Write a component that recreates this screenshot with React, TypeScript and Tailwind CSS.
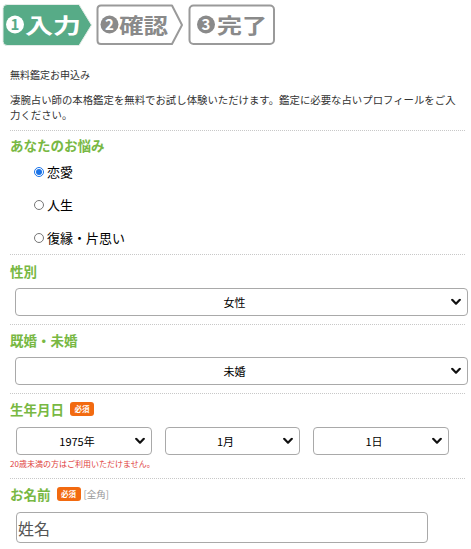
import React from "react";

const FONT = '"Noto Sans CJK JP", "Noto Sans", sans-serif';

function Chevron() {
  return (
    <svg
      className="pointer-events-none absolute right-[7px] top-1/2 -translate-y-1/2"
      width="10"
      height="7"
      viewBox="0 0 10 7"
    >
      <path d="M1.2 1.3 L5 5.2 L8.8 1.3" fill="none" stroke="#111" strokeWidth="2.2" strokeLinecap="round" strokeLinejoin="round" />
    </svg>
  );
}

function Select({ value, className }: { value: string; className: string }) {
  return (
    <div className={`relative ${className}`}>
      <select
        defaultValue={value}
        className="block h-[28px] w-full appearance-none rounded-[4px] border border-[#a9a9a9] bg-white pl-[4px] pr-[18px] text-center text-[11px] text-black outline-none [text-align-last:center]"
        style={{ fontFamily: FONT }}
      >
        <option>{value}</option>
      </select>
      <Chevron />
    </div>
  );
}

function Badge() {
  return (
    <span className="flex h-[14px] w-[24px] shrink-0 items-center justify-center rounded-[3px] bg-[#f26a10] text-[7.5px] font-bold leading-none text-white">
      必須
    </span>
  );
}

function Heading({ children }: { children: React.ReactNode }) {
  return <div className="text-[13.5px] font-bold leading-[18px] text-[#78b843]">{children}</div>;
}

function Divider() {
  return <div className="w-[455px] border-t border-dotted border-[#c8c8c8]" />;
}

function Steps() {
  return (
    <svg width="280" height="50" viewBox="0 0 280 50" style={{ fontFamily: FONT }}>
      {/* step 1 */}
      <path
        d="M7 4.5 H79 L91.5 25 L79 45.5 H7 Q3 45.5 3 41.5 V8.5 Q3 4.5 7 4.5 Z"
        fill="#57ab87"
        stroke="#e4ece8"
        strokeWidth="1"
      />
      <circle cx="15" cy="24.5" r="9" fill="#fff" />
      <text x="15" y="30" textAnchor="middle" fontSize="15" fontWeight="700" fill="#57ab87">1</text>
      <text x="25" y="33" fontSize="21" fontWeight="700" fill="#fff" textLength="56" lengthAdjust="spacingAndGlyphs">入力</text>

      {/* step 2 */}
      <path
        d="M101 5.5 H172 L182 25 L172 44 H101 Q97.5 44 97.5 40.5 V9 Q97.5 5.5 101 5.5 Z"
        fill="#fff"
        stroke="#9a9a9a"
        strokeWidth="2"
        strokeLinejoin="round"
      />
      <circle cx="109.5" cy="24.5" r="9" fill="#8a8a8a" />
      <text x="109.5" y="30" textAnchor="middle" fontSize="15" fontWeight="700" fill="#fff">2</text>
      <text x="119" y="33" fontSize="21" fontWeight="700" fill="#8a8a8a" textLength="49" lengthAdjust="spacingAndGlyphs">確認</text>

      {/* step 3 */}
      <rect x="189.5" y="5.5" width="84.5" height="38.5" rx="4" fill="#fff" stroke="#9a9a9a" strokeWidth="2" />
      <circle cx="206" cy="24.5" r="9" fill="#8a8a8a" />
      <text x="206" y="30" textAnchor="middle" fontSize="15" fontWeight="700" fill="#fff">3</text>
      <text x="217" y="33" fontSize="21" fontWeight="700" fill="#8a8a8a" textLength="50" lengthAdjust="spacingAndGlyphs">完了</text>
    </svg>
  );
}

function Radio({ label, checked }: { label: string; checked?: boolean }) {
  return (
    <label className="flex h-[33px] items-center pl-[24px]">
      <input
        type="radio"
        name="worry"
        defaultChecked={checked}
        className="m-0 h-[10px] w-[10px] accent-[#1a73e8]"
      />
      <span className="ml-[3px] text-[13px] leading-[18px] text-black">{label}</span>
    </label>
  );
}

export default function App() {
  return (
    <div className="h-[549px] w-[471px] overflow-hidden bg-white text-[#333]" style={{ fontFamily: FONT }}>
      <Steps />
      <div className="pl-[10px]">
        <div className="mt-[17px] text-[10px] leading-[15px] text-[#333]">無料鑑定お申込み</div>
        <p className="mt-[10px] w-[452px] text-[10.4px] leading-[15px] text-[#333]">
          凄腕占い師の本格鑑定を無料でお試し体験いただけます。鑑定に必要な占いプロフィールをご入力ください。
        </p>
        <div className="mt-[8px]">
          <Divider />
        </div>

        <div className="pt-[5px]">
          <Heading>あなたのお悩み</Heading>
          <div className="mt-px">
            <Radio label="恋愛" checked />
            <Radio label="人生" />
            <Radio label="復縁・片思い" />
          </div>
        </div>
        <Divider />

        <div className="pt-[7px]">
          <Heading>性別</Heading>
          <Select value="女性" className="ml-[5px] mt-[8px] w-[453px]" />
        </div>
        <div className="mt-[8px]">
          <Divider />
        </div>

        <div className="pt-[6px]">
          <Heading>既婚・未婚</Heading>
          <Select value="未婚" className="ml-[5px] mt-[8px] w-[453px]" />
        </div>
        <div className="mt-[8px]">
          <Divider />
        </div>

        <div className="pt-[6px]">
          <div className="flex h-[18px] items-center gap-[6px]">
            <Heading>生年月日</Heading>
            <Badge />
          </div>
          <div className="ml-[6px] mt-[9px] flex gap-[13px]">
            <Select value="1975年" className="w-[136px]" />
            <Select value="1月" className="w-[135px]" />
            <Select value="1日" className="w-[136px]" />
          </div>
          <div className="mt-[3px] text-[8px] leading-[12px] text-[#e0403c]">20歳未満の方はご利用いただけません。</div>
        </div>
        <div className="mt-[8px]">
          <Divider />
        </div>

        <div className="pt-[6px]">
          <div className="flex h-[18px] items-center">
            <Heading>お名前</Heading>
            <div className="ml-[6px]">
              <Badge />
            </div>
            <span className="ml-[3px] text-[9.5px] leading-[14px] text-[#999]">[全角]</span>
          </div>
          <input
            type="text"
            placeholder="姓名"
            className="ml-[6px] mt-[9px] block h-[31px] w-[412px] rounded-[4px] border border-[#a9a9a9] px-[1px] text-[16px] text-black outline-none placeholder:text-[#555]"
            style={{ fontFamily: FONT }}
          />
        </div>
      </div>
    </div>
  );
}
